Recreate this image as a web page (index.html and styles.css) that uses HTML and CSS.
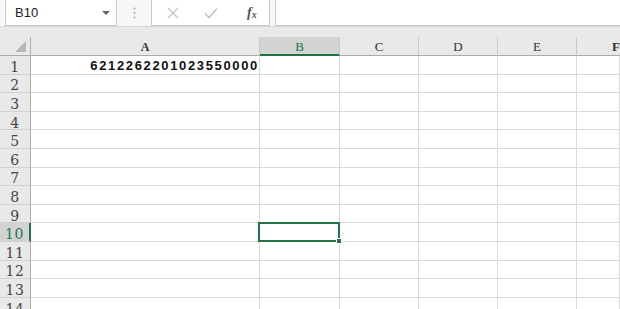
FILE: index.html
```html
<!DOCTYPE html>
<html>
<head>
<meta charset="utf-8">
<link rel="stylesheet" href="styles.css">
</head>
<body>
<div class="app">
  <div class="toolbar">
    <div class="namebox">
      <span class="ref">B10</span>
      <svg class="caret" width="8" height="5" viewBox="0 0 8 5"><path d="M0 0 L8 0 L4 4 Z" fill="#666"/></svg>
    </div>
    <div class="grip">
      <svg width="3" height="12" viewBox="0 0 3 12"><circle cx="1.5" cy="1.5" r="1" fill="#aaa"/><circle cx="1.5" cy="6" r="1" fill="#aaa"/><circle cx="1.5" cy="10.5" r="1" fill="#aaa"/></svg>
    </div>
    <div class="fbuttons">
      <svg class="ico" width="12" height="12" viewBox="0 0 12 12"><path d="M1 1 L11 11 M11 1 L1 11" stroke="#c4c4c4" stroke-width="1.3" fill="none"/></svg>
      <svg class="ico" width="14" height="12" viewBox="0 0 14 12"><path d="M1 6.5 L5 10.5 L13 1.5" stroke="#c4c4c4" stroke-width="1.6" fill="none"/></svg>
      <span class="fx">f<sub>x</sub></span>
    </div>
    <div class="formula"></div>
  </div>
  <div class="band"></div>
  <div class="sheet">
    <div class="corner"><svg width="11" height="11" viewBox="0 0 11 11"><path d="M11 0 L11 11 L0 11 Z" fill="#b8b8b8"/></svg></div>
    <div class="ch">A</div>
    <div class="ch sel">B</div>
    <div class="ch">C</div>
    <div class="ch">D</div>
    <div class="ch">E</div>
    <div class="ch last">F</div>

    <div class="rh">1</div><div class="c num">6212262201023550000</div><div class="c"></div><div class="c"></div><div class="c"></div><div class="c"></div><div class="c"></div>
    <div class="rh">2</div><div class="c"></div><div class="c"></div><div class="c"></div><div class="c"></div><div class="c"></div><div class="c"></div>
    <div class="rh">3</div><div class="c"></div><div class="c"></div><div class="c"></div><div class="c"></div><div class="c"></div><div class="c"></div>
    <div class="rh">4</div><div class="c"></div><div class="c"></div><div class="c"></div><div class="c"></div><div class="c"></div><div class="c"></div>
    <div class="rh">5</div><div class="c"></div><div class="c"></div><div class="c"></div><div class="c"></div><div class="c"></div><div class="c"></div>
    <div class="rh">6</div><div class="c"></div><div class="c"></div><div class="c"></div><div class="c"></div><div class="c"></div><div class="c"></div>
    <div class="rh">7</div><div class="c"></div><div class="c"></div><div class="c"></div><div class="c"></div><div class="c"></div><div class="c"></div>
    <div class="rh">8</div><div class="c"></div><div class="c"></div><div class="c"></div><div class="c"></div><div class="c"></div><div class="c"></div>
    <div class="rh">9</div><div class="c"></div><div class="c"></div><div class="c"></div><div class="c"></div><div class="c"></div><div class="c"></div>
    <div class="rh sel">10</div><div class="c"></div><div class="c active"><div class="selbox"><div class="handle"></div></div></div><div class="c"></div><div class="c"></div><div class="c"></div><div class="c"></div>
    <div class="rh">11</div><div class="c"></div><div class="c"></div><div class="c"></div><div class="c"></div><div class="c"></div><div class="c"></div>
    <div class="rh">12</div><div class="c"></div><div class="c"></div><div class="c"></div><div class="c"></div><div class="c"></div><div class="c"></div>
    <div class="rh">13</div><div class="c"></div><div class="c"></div><div class="c"></div><div class="c"></div><div class="c"></div><div class="c"></div>
    <div class="rh">14</div><div class="c"></div><div class="c"></div><div class="c"></div><div class="c"></div><div class="c"></div><div class="c"></div>
  </div>
</div>
</body>
</html>
```

FILE: styles.css
```css
* { box-sizing: border-box; }
html, body { margin: 0; padding: 0; }
body {
  width: 620px;
  height: 309px;
  overflow: hidden;
  background: #ffffff;
  font-family: "Liberation Sans", Arial, sans-serif;
}
.app { display: flex; flex-direction: column; width: 620px; }

.toolbar {
  height: 27px;
  display: flex;
  align-items: stretch;
  background: #f7f7f7;
  border-bottom: 1px solid #d6d6d6;
  padding-left: 5px;
}
.namebox {
  width: 112px;
  height: 27px;
  margin-top: -1px;
  background: #fff;
  border: 1px solid #c9c9c9;
  display: flex;
  align-items: center;
  justify-content: space-between;
  padding: 0 6px 0 9px;
}
.ref { font-size: 13px; color: #222; }
.caret { margin-top: 1px; }
.grip {
  width: 34px;
  display: flex;
  align-items: center;
  justify-content: center;
}
.fbuttons {
  width: 119px;
  height: 27px;
  margin-top: -1px;
  background: #fff;
  border: 1px solid #c9c9c9;
  display: flex;
  align-items: center;
  padding-left: 15px;
}
.fbuttons .ico:first-child { margin-right: 25px; }
.fbuttons .ico:nth-child(2) { margin-right: 29px; }
.fx {
  font-family: "Liberation Serif", "DejaVu Serif", serif;
  font-style: italic;
  font-weight: bold;
  font-size: 14px;
  color: #555;
  line-height: 1;
}
.fx sub { font-size: 10px; vertical-align: -1px; }
.formula {
  flex: 1;
  height: 27px;
  margin-top: -1px;
  margin-left: 5px;
  background: #fff;
  border: 1px solid #c9c9c9;
  border-right: none;
}
.band { height: 10px; background: #e9e9e9; }

.sheet {
  display: grid;
  grid-template-columns: 31px 229px 80px 79px 79px 79px 43px;
  grid-template-rows: 19px repeat(14, 18.6px);
  background: #fff;
}
.corner {
  background: #e9e9e9;
  border-right: 1px solid #ababab;
  border-bottom: 1px solid #ababab;
  display: flex;
  align-items: flex-end;
  justify-content: flex-end;
  padding: 0 4px 3px 0;
}
.ch {
  background: #e9e9e9;
  border-right: 1px solid #c8c8c8;
  border-bottom: 1px solid #ababab;
  display: flex;
  align-items: center;
  justify-content: center;
  font-family: "Liberation Serif", "DejaVu Serif", serif;
  font-size: 13px;
  color: #333;
  padding-top: 2px;
}
.ch:nth-child(2) { font-weight: bold; font-size: 12px; }
.ch.last { border-right: none; justify-content: flex-start; padding-left: 35px; font-weight: bold; }
.ch.sel {
  background: #d3d3d3;
  color: #217346;
  border-bottom: 2px solid #217346;
}
.rh {
  background: #e9e9e9;
  border-right: 1px solid #ababab;
  border-bottom: 1px solid #d0d0d0;
  display: flex;
  align-items: center;
  justify-content: center;
  font-family: "DejaVu Serif", "Liberation Serif", serif;
  font-size: 14px;
  color: #444;
  padding-top: 4px;
  letter-spacing: 0.5px;
}
.rh.sel {
  background: #d3d3d3;
  color: #217346;
  border-right: 2px solid #217346;
}
.c {
  border-right: 1px solid #dadada;
  border-bottom: 1px solid #dadada;
}
.num {
  display: flex;
  align-items: center;
  justify-content: flex-end;
  padding-right: 0;
  padding-top: 2px;
  font-family: "Liberation Sans", Arial, sans-serif;
  font-weight: bold;
  font-size: 13px;
  letter-spacing: 1.65px;
  color: #111;
}
.active { position: relative; }
.selbox {
  position: absolute;
  left: -2px;
  top: -1px;
  right: -1px;
  bottom: -1px;
  border: 2px solid #217346;
}
.handle {
  position: absolute;
  right: -4px;
  bottom: -4px;
  width: 6px;
  height: 6px;
  background: #217346;
  border: 1px solid #fff;
}
```
